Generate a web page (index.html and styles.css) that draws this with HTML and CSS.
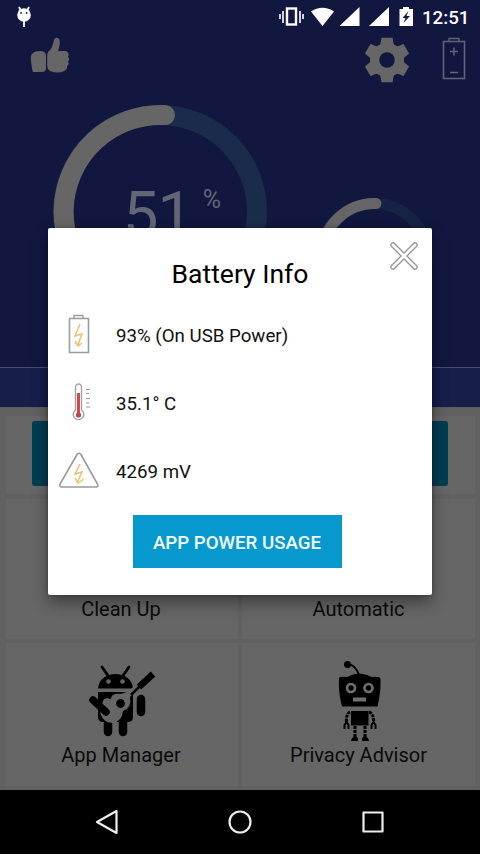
FILE: index.html
```html
<!DOCTYPE html>
<html lang="en">
<head>
<meta charset="utf-8">
<title>Battery Info</title>
<link rel="stylesheet" href="styles.css">
</head>
<body>
<div class="screen">
  <section class="hero">
    <header class="status">
      <svg class="notice" width="16" height="22" viewBox="0 0 16 22"><path d="M3 1l2 4M13 1l-2 4M8 14v7" stroke="#fff" stroke-width="1.8"/><circle cx="8" cy="9" r="6.8" fill="#fff"/><circle cx="5" cy="7" r=".9" fill="#252b55"/><circle cx="10.700" cy="7" r=".9" fill="#252b55"/></svg>
      <svg class="signals" width="136" height="22" viewBox="0 0 136 22">
        <g fill="none" stroke="#fff"><rect x="8" y="2.500" width="9" height="16" stroke-width="2.400"/><path d="M4 5v12M21 5v12" stroke-width="1.600"/><path d="M1 8v5M24 8v5" stroke-width="1.600"/></g>
        <path d="M32 5.500Q43.500-2 55 5.500L43.500 20zM80.500 1v19H60.500zM110 1v19H90z" fill="#fff"/>
        <path d="M120.500 3h3.500V1h6v2h4v17h-13.500z" fill="#fff"/><path d="M129.500 5l-6 7h3l-2 5 6.500-7h-3.500z" fill="#151a3e"/>
      </svg>
      <span class="clock">12:51</span>
    </header>
    <div class="tools">
      <svg class="like" width="40" height="38" viewBox="0 0 40 38"><path d="M3 16Q5 14 10 14Q16 14 16 19V31Q16 35 12 35H3Q2 33 1 24Q0 18 3 16ZM18 15C21 13 23 8 24 3Q25 0 28 1C31 3 30 8 28 14H36Q40 16 38 20Q40 22 38 25Q40 27 37 29Q38 32 34 34Q28 37 20 34Q17 32 17 28V18Z" fill="#666"/><path d="M16.600 17v15" stroke="#121740" stroke-width="1.200"/></svg>
      <svg class="gear" width="46" height="46" viewBox="-23 -23 46 46"><g fill="#666"><circle r="17"/><path d="M-7-14L-5.500-22.300H5.500L7-14V14L5.500 22.300H-5.500L-7 14Z"/><path transform="rotate(60)" d="M-7-14L-5.500-22.300H5.500L7-14V14L5.500 22.300H-5.500L-7 14Z"/><path transform="rotate(120)" d="M-7-14L-5.500-22.300H5.500L7-14V14L5.500 22.300H-5.500L-7 14Z"/></g><circle r="7.700" fill="#121740"/></svg>
      <svg class="cell" width="24" height="44" viewBox="0 0 24 44" fill="none" stroke="#626577"><path d="M1.500 4.500h21v37h-21z" stroke-width="1.600"/><path d="M7 4V1.500h10V4" stroke-width="1.300"/><path d="M8 14.500h8M12 10.500v8M8 35.500h8" stroke-width="1.500"/></svg>
    </div>
    <div class="gauges">
      <div class="gauge-main">
        <svg width="214" height="214" viewBox="0 0 214 214" fill="none" stroke-width="20"><circle cx="107" cy="107" r="97" stroke="#1b2b4b"/><path d="M112 10.100A97 97 0 1 0 107 204" stroke="#666" stroke-linecap="round"/></svg>
        <div class="reading"><span class="value">51</span><span class="unit">%</span></div>
      </div>
      <svg class="gauge-small" width="118" height="118" viewBox="0 0 118 118" fill="none" stroke-width="11"><circle cx="59" cy="59" r="53.500" stroke="#172344"/><path d="M61 5.500A53.500 53.500 0 1 0 59 112.500" stroke="#666" stroke-linecap="round"/></svg>
    </div>
    <div class="strip"></div>
  </section>
  <main class="content">
    <div class="boost"><div class="boost-bar"></div></div>
    <div class="tiles">
      <div class="tile"><span class="label">Clean Up</span></div>
      <div class="tile"><span class="label">Automatic</span></div>
      <div class="tile">
        <svg width="70" height="76" viewBox="85 662 70 76"><path d="M101 667l7 10M128 667l-7 10" stroke="#000" stroke-width="2.800" stroke-linecap="round"/><path d="M97 688.500C98 669 131 669 132 688.500ZM97 692H132V717Q132 722 127 722H102Q97 722 97 717Z"/><circle cx="107.500" cy="681.500" r="2.300" fill="#666"/><circle cx="121.500" cy="681.500" r="2.300" fill="#666"/><path d="M107 720v12M122 720v12M140 699v13" stroke="#000" stroke-width="8.500" stroke-linecap="round"/><path d="M102 701Q103 697 110 699Q110 693 120 694L128 691L133 686L136 690L129 697Q131 708 122 711Q121 721 112 723Q101 723 99 711Z" fill="#666"/><circle cx="119.500" cy="703.500" r="4.400"/><path d="M92 700l13 12" stroke="#000" stroke-width="7.500" stroke-linecap="round"/><path d="M130 695l14-14" stroke="#000" stroke-width="2.500"/><path d="M138 687l14-13" stroke="#000" stroke-width="6.500"/></svg>
        <span class="label">App Manager</span>
      </div>
      <div class="tile">
        <svg width="50" height="84" viewBox="333 658 50 84"><circle cx="346.500" cy="663.500" r="3.500"/><path d="M347 663.500Q354 663 358 674" fill="none" stroke="#000" stroke-width="1.800"/><path d="M338 677Q339 675 346 676Q358 669 371 676Q379 675 379.500 678Q380 691 376.500 705.500H341Q337 690 338 677ZM350 710h17.500v14.500H350z"/><g fill="#000" stroke="#707070" stroke-width="2.600"><circle cx="350" cy="687" r="4"/><circle cx="367.500" cy="687" r="4"/></g><path d="M352 696.500h13v4h-13z" fill="#707070"/><path d="M349 711Q345 713 345.500 721M368 711Q373 713 372.500 721M354 725v11M364 725v11" fill="none" stroke="#000" stroke-width="3" stroke-dasharray="3 1"/><path d="M343.500 728v-4l2-3 2 3v4M370.500 728v-4l2-3 2 3v4" fill="none" stroke="#000" stroke-width="2"/><path d="M350 740l1-3 3-2 3 2v3zM361 740v-3l3-2 3 2 1 3z"/></svg>
        <span class="label">Privacy Advisor</span>
      </div>
    </div>
  </main>
  <nav class="nav">
    <svg width="24" height="28" viewBox="0 0 24 28"><path d="M21.500 3v22L2 14z"/></svg>
    <svg width="24" height="28" viewBox="0 0 24 28"><circle cx="12" cy="14" r="10.500"/></svg>
    <svg width="24" height="28" viewBox="0 0 24 28"><path d="M2.500 4.500h19v19h-19z"/></svg>
  </nav>
</div>
<div class="dialog">
  <svg class="close" width="30" height="30" viewBox="0 0 30 30" fill="none" stroke-linecap="round"><path d="M4 4l22 22M26 4L4 26" stroke="#999" stroke-width="5.500"/><path d="M4 4l22 22M26 4L4 26" stroke="#fff" stroke-width="2.800"/></svg>
  <h1 class="title">Battery Info</h1>
  <ul class="facts">
    <li class="fact"><svg width="42" height="42" viewBox="0 0 42 42" fill="none"><path d="M11.500 4.500h19v34h-19z" stroke="#999da2" stroke-width="1.600"/><path d="M16 4V1.500h9V4" stroke="#999da2" stroke-width="1.300"/><path d="M22 10l-5 12 7-2-4 11M17 27l3 5 4-3" stroke="#e6c36c" stroke-width="1.500"/></svg><span>93% (On USB Power)</span></li>
    <li class="fact"><svg width="42" height="42" viewBox="0 0 42 42" fill="none"><path d="M17.500 28V6Q17.500 2 20.500 2T23.500 6V28A5.300 5.300 0 1 1 17.500 28Z" stroke="#a4a4a8" stroke-width="1.400"/><path d="M20.500 11v22" stroke="#d4494c" stroke-width="3"/><circle cx="20.500" cy="33" r="2.600" fill="#c93e43"/><path d="M28 7.500h4M28 11.500h3M28 16.500h4M28 21h3M28 25h4" stroke="#999" stroke-width="1.200"/></svg><span>35.1° C</span></li>
    <li class="fact"><svg width="42" height="42" viewBox="0 0 42 42" fill="none"><path d="M19 4.500Q21 2 23 4.500L39.500 34Q41 37 38 37H4Q1 37 2 34Z" stroke="#999" stroke-width="1.600"/><path d="M22 14l-5 10 7-2-4 9M17 28l3 5 6-4" stroke="#e6c36c" stroke-width="1.500"/></svg><span>4269 mV</span></li>
  </ul>
  <button class="action" type="button"><span>APP POWER USAGE</span></button>
</div>
</body>
</html>
```

FILE: styles.css
```css
* { box-sizing: border-box; }
body { margin: 0; font-family: Roboto, "Liberation Sans", sans-serif; color: #000; }
svg { display: block; flex: none; }
.screen { width: 480px; height: 854px; display: flex; flex-direction: column; overflow: hidden; background: #616161; }
.hero { height: 407px; background: #121740; display: flex; flex-direction: column; flex: none; }
.status { height: 34px; display: flex; align-items: flex-start; padding: 6px 0 0 16px; flex: none; }
.signals { margin-left: 247px; }
.clock { margin-left: 7px; font-size: 18.7px; font-weight: 500; line-height: 24px; color: #fff; }
.tools { height: 52px; display: flex; align-items: flex-start; padding: 3px 14px 0 30px; flex: none; }
.gear { margin: 0 32px 0 294px; }
.gauges { flex: 1; min-height: 0; overflow: hidden; display: flex; align-items: flex-start; padding: 19px 0 0 53px; }
.gauge-main { display: grid; width: 214px; height: 214px; }
.gauge-main > * { grid-area: 1 / 1; }
.reading { display: flex; align-items: flex-start; justify-content: flex-start; padding: 73px 0 0 70px; color: #646575; }
.value { font-size: 63px; line-height: 74px; letter-spacing: -1px; }
.unit { font-size: 25px; line-height: 30px; margin: 7px 0 0 11px; }
.gauge-small { margin: 93px 0 0 48px; }
.strip { height: 40px; border-top: 1px solid #484c6a; background: #171e4a; flex: none; }
.content { flex: 1; padding: 8px 5px 4px 6px; display: flex; flex-direction: column; gap: 5px; border-top: 1px solid #5d5d5d; }
.boost { height: 78px; background: #666; padding: 5px 27px 5px 26px; }
.boost-bar { height: 65px; background: #003d52; border-radius: 3px; }
.tiles { flex: 1; display: grid; grid-template-columns: 232px 1fr; grid-template-rows: 140px 1fr; gap: 4px; }
.tile { background: #666; display: flex; flex-direction: column; justify-content: flex-end; align-items: center; padding: 0 2px 18px 0; }
.tile:nth-child(even) { padding-right: 0; }
.tile:nth-child(n+3) { padding-bottom: 19px; }
.label { font-size: 20px; line-height: 24px; color: #0a0a0a; }
.tile svg { margin-bottom: 5px; }
.tile:nth-child(4) svg { margin-bottom: 0; }
.nav { height: 64px; background: #000; display: flex; justify-content: space-between; align-items: center; padding: 0 95px; flex: none; }
.nav svg { fill: none; stroke: #eee; stroke-width: 2.2; stroke-linejoin: round; }
.dialog { position: absolute; left: 48px; top: 228px; width: 384px; height: 367px; background: #fff; border-radius: 2px; box-shadow: 0 8px 16px rgba(0,0,0,.38), 0 0 4px rgba(0,0,0,.3); }
.close { position: absolute; right: 13px; top: 13px; }
.title { margin: 29px 0 23px; font-size: 26.5px; line-height: 34px; font-weight: 400; text-align: center; }
.facts { list-style: none; margin: 0; padding: 0 0 0 10px; display: flex; flex-direction: column; gap: 26px; height: 197px; }
.fact { display: flex; align-items: center; height: 42px; gap: 16px; font-size: 18.7px; color: #111; }
.fact span { padding-top: 2px; }
.action { display: block; width: 209px; height: 53px; margin: 4px 0 0 84.5px; padding: 2px 0 0; border: 0; background: #0799cd; color: #f2fcff; font: 500 18.7px Roboto, "Liberation Sans", sans-serif; white-space: nowrap; }
```
